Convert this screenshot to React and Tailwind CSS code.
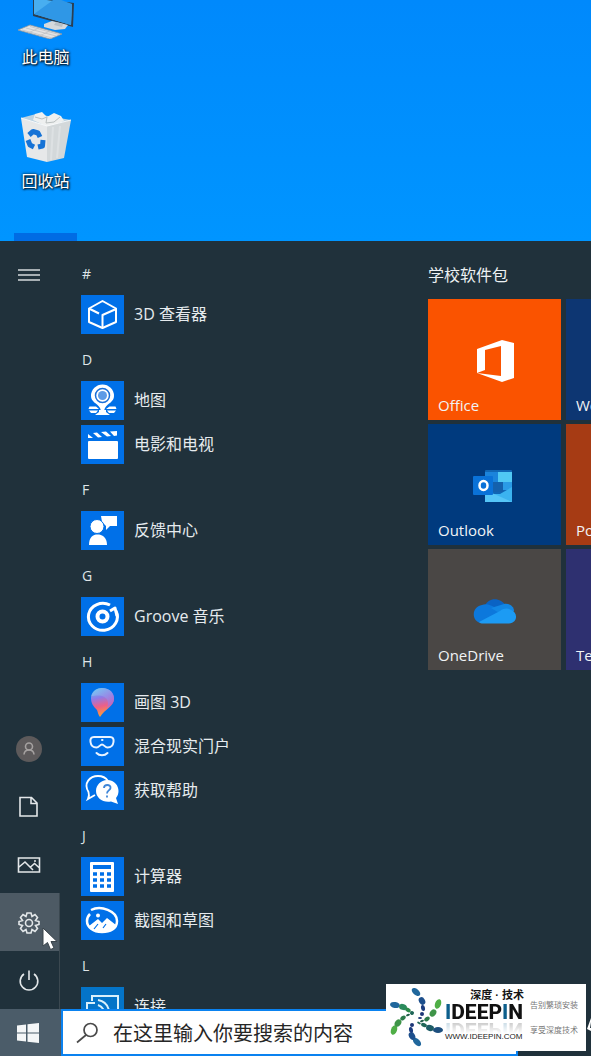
import { useState } from 'react';

const uiFont = "font-['Open_Sans','Noto_Sans_CJK_SC',sans-serif]";

function ComputerIcon() {
  return (
    <svg viewBox="8 0 60 39" className="w-[60px] h-[39px]" aria-hidden="true">
      <path d="M25 -2 L66 3 L65 27 L25 16 Z" fill="#2b3f52" />
      <path d="M26 -2 L64 4 L63 25 L26 14 Z" fill="#48aef0" />
      <path d="M26 14 L48 -2 L64 4 L63 25 Z" fill="#2f97e6" />
      <path d="M36 24 L44 21 L60 25 L57 29 L47 30 L36 27 Z" fill="#d5d9dc" />
      <path d="M48 22 L55 24 L54 27 L46 25 Z" fill="#b8c0c6" />
      <path d="M10 30 L22 25 L54 34 L42 39 Z" fill="#e3e3e3" stroke="#8f989e" strokeWidth="0.8" />
      <path d="M14 30 L44 38 M18 28 L48 36 M22 26.500 L51 34.500 M20 33 L31 28 M31 36 L42 31" stroke="#b9bcbf" strokeWidth="0.7" />
    </svg>
  );
}

function BinIcon() {
  return (
    <svg viewBox="0 0 52 54" className="w-[52px] h-[54px]" aria-hidden="true">
      <path d="M1 9 L16 5 L51 11 L27 18 Z" fill="#bcd3e2" />
      <path d="M13 11 L15 5 L22 3 L27 8 L34 4 L41 7 L44 12 L28 18 Z" fill="#eef0f0" />
      <path d="M15 8 L22 10 L27 8 M27 8 L26 14 L34 13 L40 8" stroke="#b9bfbf" fill="none" />
      <path d="M1 9 L27 17 L27 53 L7 48 Z" fill="#e6e8e9" />
      <path d="M27 17 L51 11 L44 49 L27 53 Z" fill="#d3d8da" />
      <path d="M1 9 L27 17 L51 11" stroke="#f7f9fa" fill="none" />
      <path d="M33 18 L31 51 M40 17 L37 49" stroke="#dde1e3" strokeWidth="2" />
      <path d="M9 26 L13 22.500 L18 24 L20 28" stroke="#1673d6" strokeWidth="5" fill="none" strokeLinejoin="round" />
      <path d="M8 31 L10 36 L14 38 M18 38 L22.500 37 L23 31" stroke="#1673d6" strokeWidth="5" fill="none" strokeLinejoin="round" />
    </svg>
  );
}

const glyphs = {
  cube: (
    <g fill="none" stroke="#fff" strokeWidth="2" strokeLinejoin="round">
      <path d="M21.500 6 L35 13.500 V27 L21.500 33 L8 27 V13.500 Z" />
      <path d="M34 14.500 L21.500 20 V32 M9 14 L18 18.500" />
    </g>
  ),
  map: (
    <g fill="#fff">
      <path d="M8.500 25.500 H15 L18 28 H7.500 Z M28.500 25.500 H34.500 L35.500 28 H25 Z" />
      <path d="M8 29.500 H17 L15 32 H10 Z M26 29.500 H35 L33 32 H28 Z" />
      <path d="M18 29 H25 V31 L29 34 H14 L18 31 Z" />
      <path d="M21.500 3.500 A11.500 11.500 0 0 1 33 15 C33 21 27 22 24 27 L22.500 31 H20.500 L19 27 C16 22 10 21 10 15 A11.500 11.500 0 0 1 21.500 3.500 Z" />
      <circle cx="21.500" cy="14.500" r="7" stroke="#1a6fd8" strokeWidth="1.500" />
      <circle cx="21.500" cy="14.500" r="4.500" fill="#5e9be6" />
    </g>
  ),
  film: (
    <g fill="#fff">
      <path d="M7 9 L12 13 H7 Z M12 8 L16 7.500 L21 12 L17 12.500 Z M20 7 L25 6.500 L30 11 L26 11.500 Z M29 6.500 L36 6 V10.500 L33 11 Z" />
      <rect x="7" y="16" width="30" height="18" rx="1" />
    </g>
  ),
  feedback: (
    <g fill="#fff">
      <path d="M20 5 H36 V15 H29 L25 19 V15 L21 11 Z" />
      <circle cx="16" cy="15.500" r="7" stroke="#0070e8" />
      <path d="M8 34 C8 26 12 23.500 16.500 23.500 C21 23.500 26 26 26 34 Z" />
    </g>
  ),
  groove: (
    <g fill="none" stroke="#fff">
      <path d="M29 8 A14.500 13.500 0 1 0 35 14" strokeWidth="3" />
      <circle cx="21.500" cy="19.500" r="5" strokeWidth="4" />
      <path d="M29 14 L34 11 L36 19" strokeWidth="3" strokeLinejoin="round" />
    </g>
  ),
  paint: (
    <g>
      <defs>
        <linearGradient id="paint" x1="0.2" y1="0" x2="0.4" y2="1">
          <stop offset="0" stopColor="#5bc6f5" />
          <stop offset="0.350" stopColor="#8f7be8" />
          <stop offset="0.650" stopColor="#ee5f86" />
          <stop offset="1" stopColor="#f8a136" />
        </linearGradient>
        <linearGradient id="paintSide" x1="0" y1="0" x2="1" y2="1">
          <stop offset="0" stopColor="#79d2f6" />
          <stop offset="1" stopColor="#b25bd8" />
        </linearGradient>
      </defs>
      <path d="M21 5 C29 5 33 10 33 16 C33 23 24 26 19 34 C17 32 17 29 16 27 C12 23 10 20 10 15 C10 9 15 5 21 5 Z" fill="url(#paint)" />
      <path d="M21 5 C29 5 33 10 33 16 C33 20 29 23 26 25 C28 19 27 15 21 13 C17 12 13 13 10.500 13 C12 8 16 5 21 5 Z" fill="url(#paintSide)" opacity="0.750" />
    </g>
  ),
  reality: (
    <g fill="none" stroke="#e9f3ff" strokeWidth="2" strokeLinecap="round">
      <path d="M13 10 H29 C32 10 33 12 32.500 15 C32 19 29 20.500 26.500 20.500 C24 20.500 23 17.500 21 17.500 C19 17.500 18 20.500 15.500 20.500 C13 20.500 10 19 9.500 15 C9 12 10 10 13 10 Z" />
      <path d="M15.500 26 C18.500 29 23.500 29 26.500 26" />
      <path d="M21 13 H21.500" />
    </g>
  ),
  help: (
    <g>
      <path d="M14 24 L7 28 C8.500 25 8.500 24 7.500 21 C2 12 9 5 17 5 C22 5 25 7 27 10" fill="none" stroke="#fff" strokeWidth="1.800" />
      <path d="M26 9 C34 9 37.500 15 37.500 20 C37.500 23 36.500 25 35 27 L37 33 L30 30.500 C22 32 15 27 15 20 C15 14 20 9 26 9 Z" fill="#fff" />
      <path d="M23 17 C23 13 30 13 29.500 17 C29 19.500 26 19.500 26 22.500 M26 24.500 V26.500" fill="none" stroke="#3f86d8" strokeWidth="1.800" />
    </g>
  ),
  calc: (
    <g>
      <rect x="9" y="5" width="24" height="30" rx="1" fill="#fff" />
      <rect x="12" y="8" width="18" height="4" fill="#0070e8" />
      <path d="M12 17 H30 M12 23 H30 M12 29 H30" stroke="#0070e8" strokeWidth="3.500" strokeDasharray="4 3" />
    </g>
  ),
  snip: (
    <g>
      <path d="M10 9 C20 4 36 10 36 20 C36 28 29 31 21 31 C12 31 6 26 6 20 C6 18 7 15 9 13" fill="none" stroke="#fff" strokeWidth="2.500" />
      <path d="M8 25 L17 18 L21 22 L26 17 L35 24 C32 30 26 31 21 31 C15 31 11 29 8 25 Z" fill="#fff" />
      <circle cx="17" cy="14.500" r="2" fill="#fff" />
      <path d="M13 28 L17 23 M22 27 L25 23" stroke="#0070e8" strokeWidth="1.200" />
    </g>
  ),
  connect: (
    <g fill="none" stroke="#d9f0fb" strokeWidth="2">
      <path d="M11 14 V9 H37 V24" />
      <path d="M14 16 H6 V24 M16 22 V26" />
      <path d="M17 13 C23 14 27 18 28 24 M17 18 C20 19 22 21 23 24" />
    </g>
  ),
};

const groups = [
  { letter: '#', apps: [{ name: '3D 查看器', icon: 'cube' }] },
  { letter: 'D', apps: [{ name: '地图', icon: 'map' }, { name: '电影和电视', icon: 'film' }] },
  { letter: 'F', apps: [{ name: '反馈中心', icon: 'feedback' }] },
  { letter: 'G', apps: [{ name: 'Groove 音乐', icon: 'groove' }] },
  {
    letter: 'H',
    apps: [
      { name: '画图 3D', icon: 'paint' },
      { name: '混合现实门户', icon: 'reality' },
      { name: '获取帮助', icon: 'help' },
    ],
  },
  { letter: 'J', apps: [{ name: '计算器', icon: 'calc' }, { name: '截图和草图', icon: 'snip' }] },
  { letter: 'L', apps: [{ name: '连接', icon: 'connect', tone: 'bg-[#0474c8]' }] },
];

function AppList() {
  return (
    <nav aria-label="应用" className="w-[368px] shrink-0 overflow-hidden pt-[9px] pl-[21px]">
      {groups.map((group) => (
        <section key={group.letter}>
          <h3 className="flex h-[42px] items-center pt-[6px] pl-px text-sm font-medium text-[#dfe5e8]">{group.letter}</h3>
          {group.apps.map((app) => (
            <button key={app.name} type="button" className="flex h-[44px] w-full items-center gap-[10px] text-left">
              <span className={`h-[39px] w-[43px] shrink-0 ${app.tone || 'bg-[#0070e8]'}`}>
                <svg viewBox="0 0 43 39" className="h-[39px] w-[43px]" aria-hidden="true">{glyphs[app.icon]}</svg>
              </span>
              <span className="text-base leading-6 text-[#e6ebee]">{app.name}</span>
            </button>
          ))}
        </section>
      ))}
    </nav>
  );
}

const railItems = [
  {
    label: '帐户',
    icon: (
      <>
        <circle cx="14" cy="15" r="13" fill="#5d5a5b" stroke="none" />
        <circle cx="14" cy="12.500" r="3.500" />
        <path d="M9 20.500 C9.500 14.500 18.500 14.500 19 20.500" />
      </>
    ),
    tone: 'stroke-[#a5a1a0]',
  },
  { label: '文档', icon: <path d="M5 5.500 H16.500 L22 11 V24 H5 Z M16 5.500 V11.500 H22" /> },
  {
    label: '图片',
    icon: <path d="M3.500 8 H24.500 V22 H3.500 Z M4 17 L10 12 L18 20 M15 17.500 L19.500 13.500 L24.500 18 M19 11 H21" />,
  },
  {
    label: '设置',
    divider: true,
    active: true,
    icon: (
      <>
        <path d="M12 5 H16 L17 8.500 L20 6.500 L22.500 9.500 L20.500 12.500 L24 13.500 V16.500 L20.500 17.500 L22.500 20.500 L20 23.500 L17 21.500 L16 25 H12 L11 21.500 L8 23.500 L5.500 20.500 L7.500 17.500 L4 16.500 V13.500 L7.500 12.500 L5.500 9.500 L8 6.500 L11 8.500 Z" />
        <circle cx="14" cy="15" r="3.500" />
      </>
    ),
  },
  {
    label: '电源',
    divider: true,
    icon: <path d="M9 8 A8.800 8.800 0 1 0 19 8 M14 4.500 V14" />,
  },
];

function Rail() {
  return (
    <div className="flex w-[60px] shrink-0 flex-col">
      <button type="button" aria-label="展开" className="mt-[5px] mr-[2px] flex h-[58px] items-center justify-center">
        <svg viewBox="0 0 22 14" className="h-[14px] w-[22px] stroke-[#d3d9dc]" strokeWidth="1.500" aria-hidden="true">
          <path d="M0 2 H22 M0 7 H22 M0 12 H22" />
        </svg>
      </button>
      <div className="mt-auto">
        {railItems.map((item) => (
          <button
            key={item.label}
            type="button"
            aria-label={item.label}
            className={`flex h-[58px] w-full items-center pl-[15px] ${item.divider ? 'border-r border-[#3b4850]' : ''} ${item.active ? 'bg-[#4d5a64]' : ''}`}
          >
            <svg viewBox="0 0 28 28" className={`h-[28px] w-[28px] fill-none ${item.tone || 'stroke-[#e3e7e9]'}`} strokeWidth="1.600" aria-hidden="true">
              {item.icon}
            </svg>
          </button>
        ))}
      </div>
    </div>
  );
}

function OfficeLogo() {
  return (
    <svg viewBox="0 0 40 42" className="h-[42px] w-[40px]" aria-hidden="true">
      <path d="M2 9 L27 0 L39 3 V38 L27 42 L2 33 L26 36 V6 L10 10 V30 L2 33 Z" fill="#fff" />
    </svg>
  );
}

function OutlookLogo() {
  return (
    <svg viewBox="0 0 44 32" className="h-[32px] w-[44px]" aria-hidden="true">
      <rect x="12" y="0" width="27" height="32" rx="1" fill="#1066b5" />
      <path d="M12 2 H25 V12 H12 Z" fill="#1b84dc" />
      <path d="M25 2 H39 V13 H25 Z" fill="#50c8f4" />
      <path d="M20 12 H30 V22 H20 Z" fill="#1461ad" />
      <path d="M30 12 H39 V20 H30 Z" fill="#2a9be6" />
      <path d="M39 17 V32 H12 V24 L27 24 Z" fill="#3bb3f0" />
      <path d="M12 20 L39 32 H12 Z" fill="#55c5f7" />
      <rect x="0" y="6" width="20" height="19" rx="1" fill="#0a72d8" />
      <ellipse cx="10.500" cy="15.500" rx="4" ry="4.500" fill="none" stroke="#fff" strokeWidth="2.500" />
    </svg>
  );
}

function OneDriveLogo() {
  return (
    <svg viewBox="0 0 44 26" className="h-[26px] w-[44px]" aria-hidden="true">
      <path d="M12 8 C15 -1 28 -1 33 8 L22 18 L7 12 Z" fill="#0a63c4" />
      <path d="M9 25 C-2 24 -2 9 9 7 C13 5 18 7 21 9 L30 16 L12 25 Z" fill="#0c78dc" />
      <path d="M31 6 C37 5 41 9 41 13 L28 16 L18 10 Z" fill="#1287e4" />
      <path d="M6 24 L27 13 C31 10 35 10 38 12 C45 14 45 25 36 25.500 H10 C8 25.500 7 25 6 24 Z" fill="#1c9bf4" />
    </svg>
  );
}

const tiles = [
  { name: 'Office', color: 'bg-[#fa5300]', logo: <OfficeLogo /> },
  { name: 'Word', color: 'bg-[#0d3672]' },
  { name: 'Outlook', color: 'bg-[#003a7e]', logo: <OutlookLogo /> },
  { name: 'PowerPoint', color: 'bg-[#a63b14]' },
  { name: 'OneDrive', color: 'bg-[#4a4745]', logo: <OneDriveLogo /> },
  { name: 'Teams', color: 'bg-[#2e3070]' },
];

function Tiles() {
  return (
    <section className="shrink-0 pt-[22px]">
      <h2 className="text-base leading-6 text-[#edf1f3]">学校软件包</h2>
      <div className="mt-3 grid grid-cols-[133px_133px] gap-x-[5px] gap-y-1">
        {tiles.map((tile) => (
          <button
            key={tile.name}
            type="button"
            className={`grid h-[121px] grid-rows-[1fr_auto_1fr] px-[10px] pt-[2px] text-left ${tile.color}`}
          >
            <span className="row-start-2 justify-self-center">{tile.logo}</span>
            <span className="row-start-3 self-end pb-[5px] text-[15px] leading-5 text-[#f1f3f5]">{tile.name}</span>
          </button>
        ))}
      </div>
    </section>
  );
}

const swirl = [
  [30, 8, 5, 3, 40, '#20679c'], [36, 17, 4, 3, 60, '#1d4f8c'], [37, 24, 3, 2, 80, '#1c3d80'], [36, 30, 2, 2, 0, '#1c3677'], [34, 34, 2, 1, 0, '#1c3677'],
  [52, 20, 5, 3, 110, '#4fae46'], [47, 29, 4, 3, 125, '#3e9448'], [41, 35, 3, 2, 145, '#2c7a4a'], [36, 37, 2, 1, 160, '#1f5c48'],
  [52, 46, 5, 3, 0, '#1d4f7e'], [44, 44, 4, 3, 15, '#1d5c66'], [38, 41, 3, 2, 25, '#1f6657'], [33, 39, 2, 1, 30, '#1f6657'],
  [31, 58, 5, 3, 45, '#20679c'], [26, 52, 4, 3, 60, '#1d4f8c'], [25, 46, 3, 2, 80, '#1c3d80'], [26, 41, 2, 2, 0, '#1c3677'],
  [8, 46, 5, 3, 110, '#4fae46'], [12, 39, 4, 3, 125, '#3e9448'], [17, 34, 3, 2, 145, '#2c7a4a'], [22, 31, 2, 1, 160, '#1f5c48'],
  [9, 21, 5, 3, 10, '#20679c'], [17, 23, 4, 3, 20, '#2b8a5c'], [22, 26, 3, 2, 30, '#2c8a4a'], [26, 29, 2, 2, 30, '#1f6657'],
];

function SiteBadge() {
  return (
    <a href="#ideepin" className="absolute right-[5px] bottom-[5px] flex h-[67px] w-[200px] bg-white font-['Liberation_Sans','Noto_Sans_CJK_SC',sans-serif]">
      <svg viewBox="0 0 59 67" className="h-[67px] w-[59px] shrink-0" aria-hidden="true">
        {swirl.map(([x, y, rx, ry, turn, color]) => (
          <ellipse key={`${x}-${y}`} cx={x} cy={y} rx={rx} ry={ry} fill={color} transform={`rotate(${turn} ${x} ${y})`} />
        ))}
      </svg>
      <span className="flex w-[79px] shrink-0 flex-col">
        <span className="mt-1 self-end text-[11px] leading-[14px] font-bold whitespace-nowrap text-[#151515]">深度 · 技术</span>
        <span className="mt-px font-['Roboto',sans-serif] text-[21px] leading-[18px] font-extrabold text-[#111] [-webkit-box-reflect:below_0px_linear-gradient(transparent_30%,rgba(0,0,0,0.25))]">
          <span className="text-[#0d5f8c]">I</span>DEEP<span className="text-[#0d5f8c]">I</span>N
        </span>
        <span className="mt-[11px] text-[8px] leading-[10px] text-[#222]">WWW.IDEEPIN.COM</span>
      </span>
      <span className="flex flex-col gap-[13px] pt-4 pl-[6px] text-[8px] leading-3 whitespace-nowrap text-[#777]">
        <span>告别繁琐安装</span>
        <span>享受深度技术</span>
      </span>
    </a>
  );
}

function Taskbar() {
  const [query, setQuery] = useState('');

  return (
    <footer className="relative flex h-[47px] shrink-0 bg-[#20313b]">
      <button type="button" aria-label="开始" className="flex w-[61px] shrink-0 items-center justify-center bg-[#4b5c69] pr-[5px]">
        <svg viewBox="0 0 22 20" className="h-[20px] w-[22px]" fill="#f4f6f7" aria-hidden="true">
          <path d="M0 2.500 L9 1.500 V9.500 H0 Z M10.500 1.200 L22 0 V9.500 H10.500 Z M0 10.500 H9 V18.500 L0 17.500 Z M10.500 10.500 H22 V20 L10.500 18.800 Z" />
        </svg>
      </button>
      <label className="flex w-[457px] items-center gap-[14px] border-2 border-[#0a82f0] bg-white pl-3">
        <svg viewBox="0 0 24 24" className="h-[24px] w-[24px] shrink-0 fill-none stroke-[#4a4a4a]" strokeWidth="1.700" aria-hidden="true">
          <circle cx="15.500" cy="9" r="6.500" />
          <path d="M11 14 L2 21.500" />
        </svg>
        <input
          type="text"
          aria-label="搜索"
          value={query}
          onChange={(e) => setQuery(e.target.value)}
          placeholder="在这里输入你要搜索的内容"
          className="w-full bg-transparent pt-[2px] text-xl leading-7 text-[#262626] outline-none placeholder:text-[#262626]"
        />
      </label>
      <svg viewBox="0 0 4 14" className="mt-[9px] ml-auto h-[14px] w-[4px] fill-white" aria-hidden="true">
        <path d="M4 0 V4 L3 10 H4 V13 L0 11 Z" />
      </svg>
      <SiteBadge />
    </footer>
  );
}

export default function App() {
  return (
    <div className={`relative flex h-screen flex-col overflow-hidden bg-[#0090ff] ${uiFont}`}>
      <main className="flex shrink-0 flex-col items-start gap-10 bg-linear-to-b from-[#0089fc] to-[#0095ff] text-base leading-6 text-white">
        <button type="button" className="flex w-[91px] flex-col items-center gap-[6px]">
          <ComputerIcon />
          <span className="[text-shadow:1px_1px_2px_#000,0_0_3px_#000]">此电脑</span>
        </button>
        <button type="button" className="flex w-[91px] flex-col items-center gap-[6px]">
          <BinIcon />
          <span className="[text-shadow:1px_1px_2px_#000,0_0_3px_#000]">回收站</span>
        </button>
        <div className="ml-[14px] h-2 w-[63px] bg-[#006ce4]" />
      </main>

      <div className="relative flex min-h-0 flex-1 overflow-hidden bg-[#20313b]">
        <Rail />
        <AppList />
        <Tiles />
        <svg viewBox="0 0 16 24" className="absolute bottom-[58px] left-[42px] h-[24px] w-[16px]" aria-hidden="true">
          <path d="M1 1 V19 L5.500 15.500 L8.500 22.500 L12 21 L9 14.500 H15 Z" fill="#fff" stroke="#3a444b" strokeWidth="1" />
        </svg>
      </div>

      <Taskbar />
    </div>
  );
}
